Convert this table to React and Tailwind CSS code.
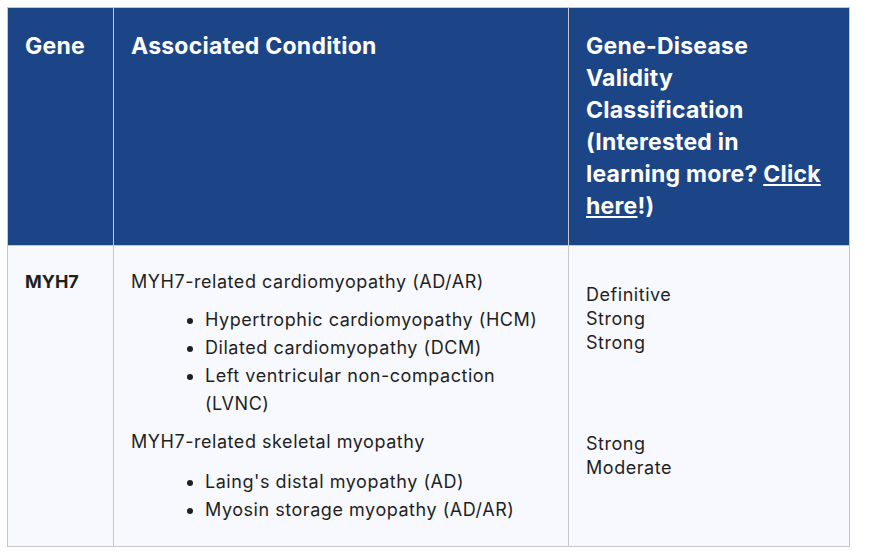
const font = { fontFamily: 'Inter, "Noto Sans", sans-serif' };

const cardio = [
  'Hypertrophic cardiomyopathy (HCM)',
  'Dilated cardiomyopathy (DCM)',
  'Left ventricular non-compaction (LVNC)',
];

const skeletal = ["Laing's distal myopathy (AD)", 'Myosin storage myopathy (AD/AR)'];

function Bullets({ items }) {
  return (
    <ul className="list-disc pl-[74px] text-[18px] leading-[28px] tracking-[0.03em]">
      {items.map((item) => (
        <li key={item}>{item}</li>
      ))}
    </ul>
  );
}

export default function App() {
  return (
    <div className="min-h-[553px] bg-white p-[7px] text-[#1f1f1f]" style={font}>
      <table className="w-[842px] table-fixed border-collapse">
        <colgroup>
          <col className="w-[106px]" />
          <col className="w-[455px]" />
          <col className="w-[281px]" />
        </colgroup>
        <thead>
          <tr className="bg-[#1c4587] text-left align-top text-[23px] font-bold leading-[32px] tracking-[0.01em] text-white">
            <th className="border border-[#c7c7c7] px-[17px] pt-[22px] pb-[23px]">Gene</th>
            <th className="border border-[#c7c7c7] px-[17px] pt-[22px] pb-[23px]">Associated Condition</th>
            <th className="border border-[#c7c7c7] pt-[22px] pb-[23px] pl-[17px] pr-[18px]">
              Gene-Disease Validity Classification (Interested in learning more?{' '}
              <a href="#" className="underline">
                Click here
              </a>
              !)
            </th>
          </tr>
        </thead>
        <tbody>
          <tr className="bg-[#f8f9fe] align-top">
            <td className="border border-[#c7c7c7] px-[17px] pt-[24px] pb-[22px] text-[18px] font-bold leading-[24px]">
              MYH7
            </td>
            <td className="border border-[#c7c7c7] px-[17px] pt-[24px] pb-[22px]">
              <p className="text-[18px] leading-[24px] tracking-[0.03em]">MYH7-related cardiomyopathy (AD/AR)</p>
              <div className="mt-3">
                <Bullets items={cardio} />
              </div>
              <p className="mt-3 text-[18px] leading-[24px] tracking-[0.03em]">MYH7-related skeletal myopathy</p>
              <div className="mt-[14px]">
                <Bullets items={skeletal} />
              </div>
            </td>
            <td className="border border-[#c7c7c7] px-[17px] pt-[24px] pb-[22px] text-[18px] leading-[24px] tracking-[0.03em]">
              <div className="mt-[13px]">
                <p>Definitive</p>
                <p>Strong</p>
                <p>Strong</p>
              </div>
              <div className="mt-[77px]">
                <p>Strong</p>
                <p>Moderate</p>
              </div>
            </td>
          </tr>
        </tbody>
      </table>
    </div>
  );
}
